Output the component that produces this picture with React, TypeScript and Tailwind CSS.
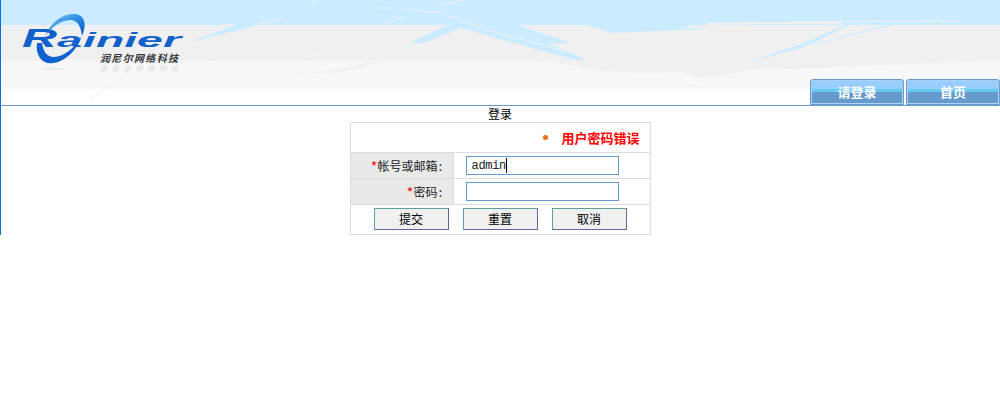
const zh = { fontFamily: '"Noto Sans CJK SC", sans-serif' };

function BannerArt() {
  return (
    <svg className="absolute left-0 top-0" width="999" height="105" viewBox="0 0 999 105" aria-hidden="true">
      <rect x="0" y="0" width="999" height="89" fill="#f0f0f0" />
      <rect x="0" y="0" width="999" height="25" fill="#cbebff" />
      {/* light lower band */}
      <path d="M0 61H550L596 71L620 72L647 73L678 72L700 77L717 77L747 70L820 68L937 63L999 61V89H0Z" fill="#f7f7f7" />
      <path d="M290 74C325 72 352 67 367 62L386 61L350 70C330 73 310 74 290 74Z" fill="#f0f0f0" />
      {/* sky streaks dipping into the grey */}
      <path d="M187 43L233 25H257Z" fill="#cbebff" />
      <path d="M408 43L447 25H517L569 43H547L583 59L578 61L460 28L423 43Z" fill="#cbebff" />
      <path d="M586 25L610 33L633 32L677 30L707 29L677 27L697 25Z" fill="#cbebff" />
      <path d="M745 63L800 44L846 24H850L810 44L800 48Z" fill="#cbebff" />
      <path d="M812 44L886 25H892L815 44Z" fill="#cbebff" />
      {/* highlights in the sky */}
      <g fill="none" stroke="#f0f0f0" strokeWidth="1">
        <path d="M187 29L233 24" />
        <path d="M257 24L282 18" />
        <path d="M383 24L403 16" />
        <path d="M377 8H388" />
        <path d="M404 9L440 13L487 30L567 52" />
        <path d="M440 5L463 0" />
        <path d="M311 1H315M325 2H328" />
        <path d="M934 14L943 25" />
      </g>
      <path d="M707 24L760 23L840 23" fill="none" stroke="#f0f0f0" strokeWidth="2" />
      <path d="M790 22L960 21" fill="none" stroke="#f0f0f0" strokeWidth="1" />
      {/* highlights in the grey and light bands */}
      <g fill="none" stroke="#f7f7f7" strokeWidth="1">
        <path d="M193 57L245 70" />
        <path d="M290 60L322 53" />
        <path d="M530 60L543 57" />
        <path d="M0 72L17 68" />
      </g>
      <g fill="none" stroke="#f0f0f0" strokeWidth="1">
        <path d="M450 88L478 78" />
        <path d="M682 84L702 88" />
        <path d="M88 100L130 72" />
      </g>
    </svg>
  );
}

function Logo() {
  const latin = "Liberation Sans, sans-serif";
  return (
    <svg className="absolute left-[10px] top-[5px]" width="180" height="72" viewBox="10 5 180 72">
      <defs>
        <linearGradient id="ring" x1="0" y1="0" x2="1" y2="1">
          <stop offset="0" stopColor="#8fcdf2" />
          <stop offset="0.5" stopColor="#2a8fe0" />
          <stop offset="1" stopColor="#0a55c4" />
        </linearGradient>
      </defs>
      {/* swoosh ring */}
      <path d="M44 36C50 22 62 13 74 14C84 15 86 25 81 36C80 26 76 19 68 20C58 21 50 28 44 36Z" fill="url(#ring)" />
      <path d="M36 43C34 56 42 65 52 63C64 62 76 50 81 36C74 48 62 57 53 57C45 57 42 50 41 43Z" fill="#0f62cf" />
      <ellipse cx="53" cy="69" rx="14" ry="1.5" fill="#e6edf3" />
      <g fill="#1161cb" fontFamily={latin} fontStyle="italic" fontWeight="700">
        <text x="21" y="47" textLength="35" lengthAdjust="spacingAndGlyphs" fontSize="25">R</text>
        <text x="56" y="47" textLength="25" lengthAdjust="spacingAndGlyphs" fontSize="20">a</text>
        <text x="82" y="47" textLength="98" lengthAdjust="spacingAndGlyphs" fontSize="21">inier</text>
      </g>
      <text x="99" y="62" textLength="78" lengthAdjust="spacing" fill="#33363c" fontFamily="Noto Sans CJK SC, sans-serif" fontStyle="italic" fontWeight="700" fontSize="10">润尼尔网络科技</text>
      <text x="99" y="71" textLength="78" lengthAdjust="spacing" fill="#e2e2e2" fontFamily="Noto Sans CJK SC, sans-serif" fontStyle="italic" fontWeight="700" fontSize="7">润尼尔网络科技</text>
    </svg>
  );
}

function Tab({ label }: { label: string }) {
  return (
    <a className="flex h-[26px] w-[94px] items-center justify-center rounded-t-[3px] border border-[#6699cc] bg-[linear-gradient(#99ccff_0,#99ccff_9px,#66ccee_9px,#66ccee_12px,#6699cc_12px)] text-[13px] font-bold text-white shadow-[inset_0_0_0_1px_#a9d4f7]" style={zh}>
      {label}
    </a>
  );
}

function Field({ label, value }: { label: string; value?: string }) {
  return (
    <div className="flex h-[26px] border-b border-[#dcdcdc]">
      <div className="flex w-[103px] items-center justify-end border-r border-[#dcdcdc] bg-[#e9e9e9] pr-[9px] text-xs text-[#222]" style={zh}>
        <span className="inline-block w-[7px] text-center text-[14px] leading-none text-[#ff0000]">*</span>
        {label}
        <span className="inline-block w-[6px] text-center">:</span>
      </div>
      <div className="pl-[12px] pt-[3px]">
        <div className="relative h-[19px] w-[153px]">
          <input
            readOnly
            value={value ?? ""}
            className="block h-[19px] w-[153px] border border-[#6699cc] bg-white px-[5px] text-[12px] tracking-[-0.3px] text-[#222] outline-none"
            style={{ fontFamily: '"Liberation Mono", monospace' }}
          />
          {value ? <span className="absolute left-[40px] top-[2px] h-[15px] w-px bg-black" /> : null}
        </div>
      </div>
    </div>
  );
}

function Btn({ label }: { label: string }) {
  return (
    <button className="h-[22px] w-[75px] border border-t-[#5f9f9f] border-l-[#5f9f9f] border-r-[#66669f] border-b-[#66669f] bg-[#f0f0f0] text-xs text-black" style={zh}>
      {label}
    </button>
  );
}

export default function App() {
  return (
    <div className="h-[400px] w-[1000px] bg-white" style={zh}>
      <div className="h-[235px] border-l border-[#0a6fd8]">
        <header className="relative flex h-[106px] items-end justify-end border-b border-[#6b9bcb]">
          <BannerArt />
          <Logo />
          <div className="relative flex gap-[2px]">
            <Tab label="请登录" />
            <Tab label="首页" />
          </div>
        </header>

        <div className="ml-[-1px] flex flex-col items-center">
          <div className="flex h-[16px] items-center text-xs text-black">登录</div>
          <div className="w-[301px] border border-b-0 border-[#dcdcdc]">
            <div className="flex h-[30px] items-center justify-end gap-[13px] border-b border-[#dcdcdc] pr-[10px]">
              <span className="h-[5px] w-[5px] rounded-full bg-[#f26a1b]" />
              <span className="text-[13px] font-bold leading-none text-[#ff0000]">用户密码错误</span>
            </div>
            <Field label="帐号或邮箱" value="admin" />
            <Field label="密码" />
            <div className="flex h-[30px] justify-center gap-[14px] border-b border-[#dcdcdc] pt-[3px]">
              <Btn label="提交" />
              <Btn label="重置" />
              <Btn label="取消" />
            </div>
          </div>
        </div>
      </div>
    </div>
  );
}
